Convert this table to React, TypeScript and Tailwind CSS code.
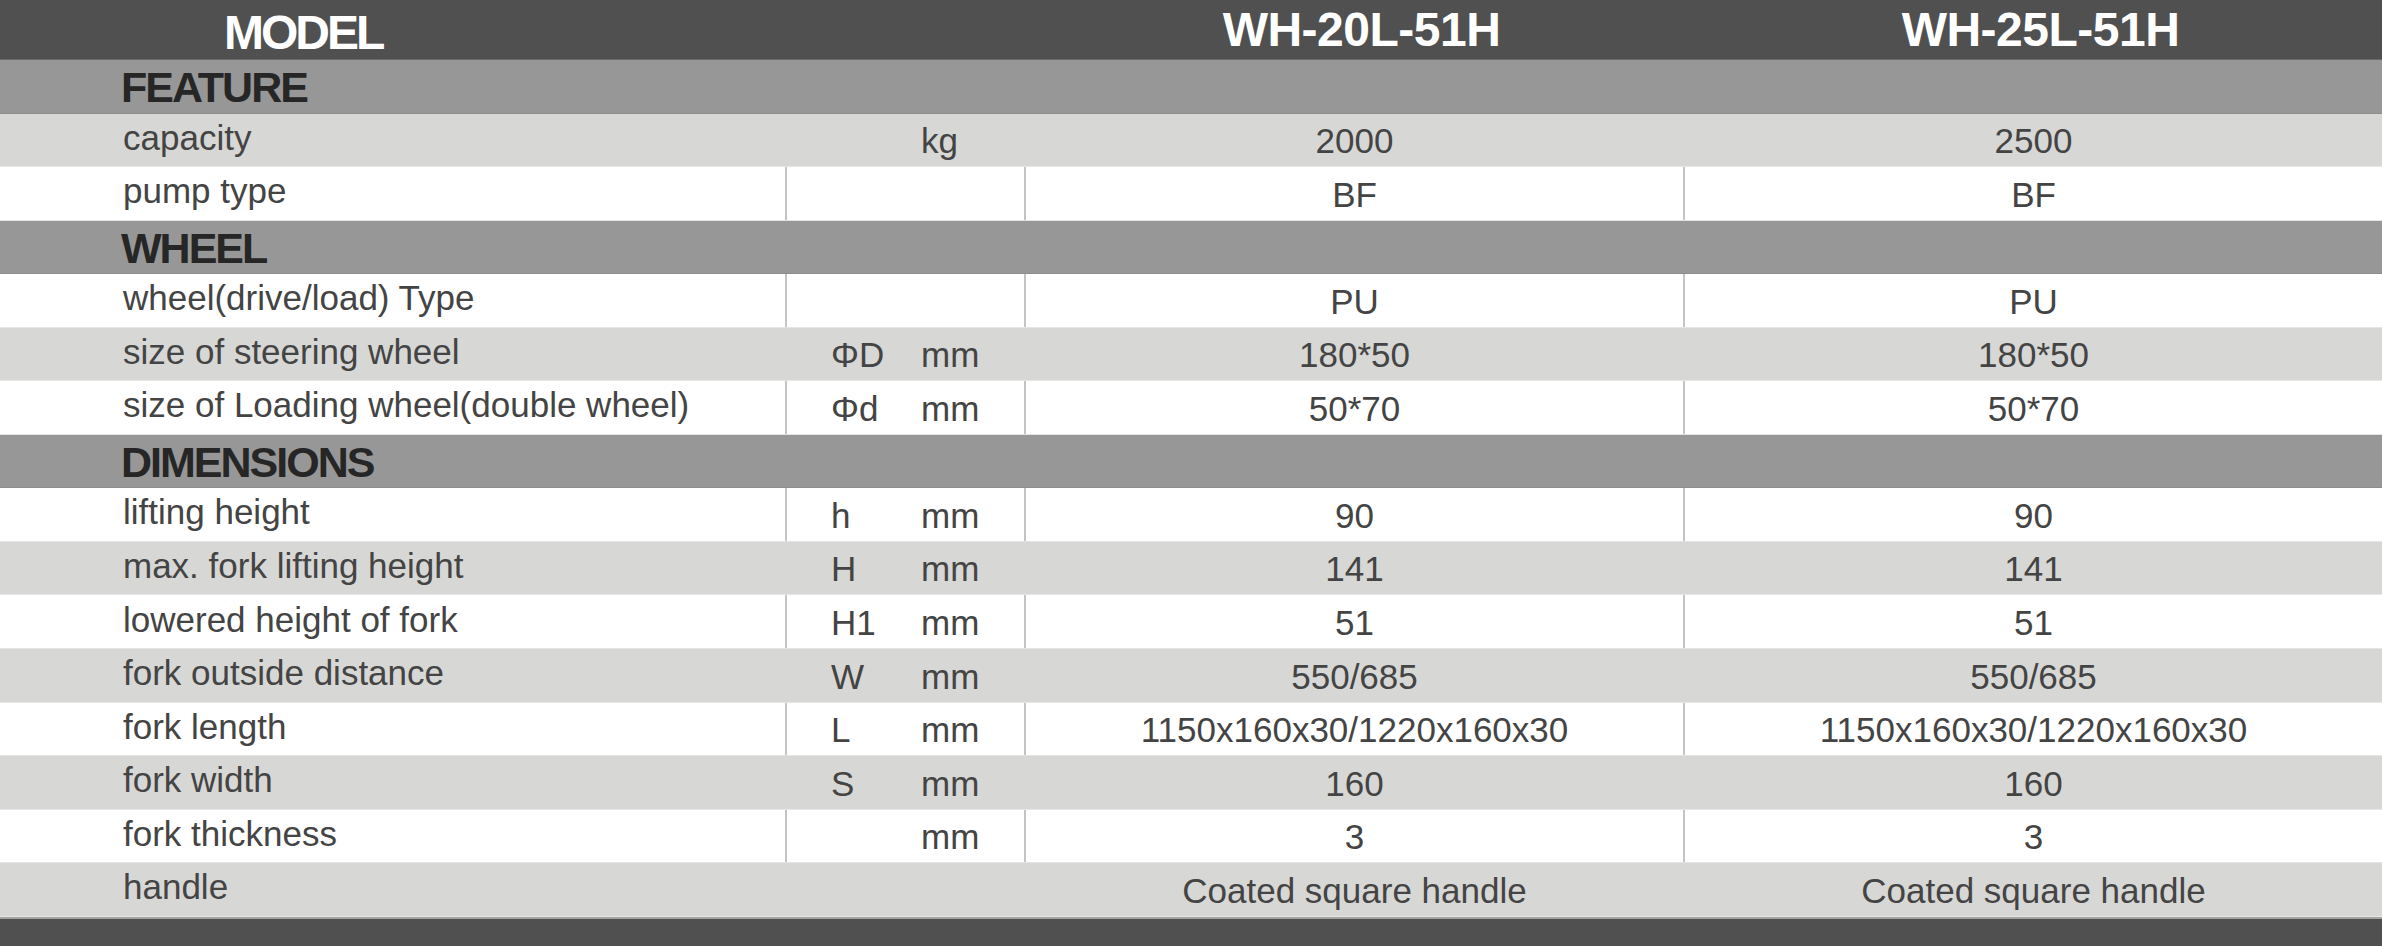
import React from "react";

type Tone = "white" | "light";

type Row =
  | { kind: "section"; title: string }
  | { kind: "data"; tone: Tone; label: string; sym?: string; unit?: string; a: string; b: string };

const rows: Row[] = [
  { kind: "section", title: "FEATURE" },
  { kind: "data", tone: "light", label: "capacity", unit: "kg", a: "2000", b: "2500" },
  { kind: "data", tone: "white", label: "pump type", a: "BF", b: "BF" },
  { kind: "section", title: "WHEEL" },
  { kind: "data", tone: "white", label: "wheel(drive/load) Type", a: "PU", b: "PU" },
  { kind: "data", tone: "light", label: "size of steering wheel", sym: "ΦD", unit: "mm", a: "180*50", b: "180*50" },
  { kind: "data", tone: "white", label: "size of Loading wheel(double wheel)", sym: "Φd", unit: "mm", a: "50*70", b: "50*70" },
  { kind: "section", title: "DIMENSIONS" },
  { kind: "data", tone: "white", label: "lifting height", sym: "h", unit: "mm", a: "90", b: "90" },
  { kind: "data", tone: "light", label: "max. fork lifting height", sym: "H", unit: "mm", a: "141", b: "141" },
  { kind: "data", tone: "white", label: "lowered height of fork", sym: "H1", unit: "mm", a: "51", b: "51" },
  { kind: "data", tone: "light", label: "fork outside distance", sym: "W", unit: "mm", a: "550/685", b: "550/685" },
  { kind: "data", tone: "white", label: "fork length", sym: "L", unit: "mm", a: "1150x160x30/1220x160x30", b: "1150x160x30/1220x160x30" },
  { kind: "data", tone: "light", label: "fork width", sym: "S", unit: "mm", a: "160", b: "160" },
  { kind: "data", tone: "white", label: "fork thickness", unit: "mm", a: "3", b: "3" },
  { kind: "data", tone: "light", label: "handle", a: "Coated square handle", b: "Coated square handle" },
];

const body = { fontFamily: '"Liberation Sans", Arial, sans-serif' };

const DataRow = ({ row }: { row: Extract<Row, { kind: "data" }> }) => {
  const white = row.tone === "white";
  const bg = white ? "bg-white border-b border-[#e4e4e4]" : "bg-[#d7d7d5] border-b border-[#e6e6e4]";
  const line = white ? "border-l-2 border-[#c4c4c4]" : "border-l-2 border-transparent";
  return (
    <div className={`flex h-[53.56px] shrink-0 text-[35px] text-[#444444] ${bg}`} style={body}>
      <div className="w-[785px] shrink-0 pl-[123px] flex items-center pb-[4px]">{row.label}</div>
      <div className={`w-[239px] shrink-0 flex items-center pt-[3px] ${line}`}>
        <span className="w-[134px] pl-[44px]">{row.sym ?? ""}</span>
        <span>{row.unit ?? ""}</span>
      </div>
      <div className={`w-[659px] shrink-0 flex items-center justify-center pt-[3px] ${line}`}>{row.a}</div>
      <div className={`flex-1 flex items-center justify-center pt-[3px] ${line}`}>{row.b}</div>
    </div>
  );
};

const SectionRow = ({ title }: { title: string }) => (
  <div
    className="h-[53.56px] shrink-0 bg-[#979798] border-b border-[#8e8e8e] flex items-center pl-[121px] pt-[2px] text-[43px] font-bold tracking-[-2px] text-[#262626]"
    style={body}
  >
    {title}
  </div>
);

export default function App() {
  return (
    <div className="w-[2382px] h-[946px] bg-white overflow-hidden flex flex-col">
      <div
        className="h-[60px] shrink-0 bg-[#505050] border-b border-[#6a6a6a] flex items-center text-white text-[48px] font-bold"
        style={body}
      >
        <div className="w-[1024px] shrink-0 pl-[224px] pt-[6px] tracking-[-3px]">MODEL</div>
        <div className="w-[675px] shrink-0 flex justify-center tracking-[-0.5px]">WH-20L-51H</div>
        <div className="flex-1 flex justify-center tracking-[-0.5px]">WH-25L-51H</div>
      </div>
      {rows.map((r, i) =>
        r.kind === "section" ? <SectionRow key={i} title={r.title} /> : <DataRow key={i} row={r} />
      )}
      <div className="flex-1 bg-[#505050] border-t-2 border-[#a3a3a3]" />
    </div>
  );
}
